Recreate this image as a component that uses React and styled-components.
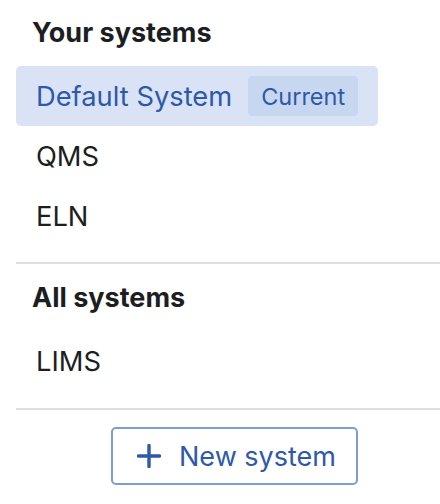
import React from "react";
import styled, { createGlobalStyle } from "styled-components";

const GlobalStyle = createGlobalStyle`
  html, body {
    margin: 0;
    padding: 0;
    background: #ffffff;
    overflow: hidden;
  }
  body {
    font-family: Inter, "Noto Sans", "Liberation Sans", sans-serif;
    color: #1c1e22;
  }
`;

const yourSystems = [
  { id: "default", name: "Default System", current: true },
  { id: "qms", name: "QMS" },
  { id: "eln", name: "ELN" }
];

const allSystems = [{ id: "lims", name: "LIMS" }];

export default function App() {
  return (
    <>
      <GlobalStyle />
      <Panel>
        <Section>
          <Heading>Your systems</Heading>
          {yourSystems.map(item => (
            <SystemRow key={item.id} $active={item.current}>
              {item.name}
              {item.current && <Badge>Current</Badge>}
            </SystemRow>
          ))}
        </Section>
        <Divider />
        <Section $spaced>
          <Heading>All systems</Heading>
          {allSystems.map(item => (
            <SystemRow key={item.id}>{item.name}</SystemRow>
          ))}
        </Section>
        <Divider />
        <Footer>
          <NewButton type="button">
            <PlusIcon />
            New system
          </NewButton>
        </Footer>
      </Panel>
    </>
  );
}

function PlusIcon() {
  return (
    <svg width="24" height="24" viewBox="0 0 24 24" fill="none">
      <path
        d="M12 1.5v21M1.5 12h21"
        stroke="currentColor"
        strokeWidth="3.4"
        strokeLinecap="round"
      />
    </svg>
  );
}

const Panel = styled.div`
  display: flex;
  flex-direction: column;
  padding-left: 16px;
`;

const Section = styled.div`
  display: flex;
  flex-direction: column;
  align-items: flex-start;
  padding: ${p => (p.$spaced ? "17px 0" : "16px 0")};
`;

const Heading = styled.div`
  font-size: 27px;
  font-weight: 700;
  line-height: 33px;
  padding-left: 16px;
  margin-bottom: 17px;
  color: #1c1e22;
`;

const SystemRow = styled.div`
  display: inline-flex;
  align-items: center;
  gap: 16px;
  height: 60px;
  box-sizing: border-box;
  padding: 0 20px;
  font-size: 27.3px;
  font-weight: 400;
  border-radius: 5px;
  color: ${p => (p.$active ? "#2e59a8" : "#1c1e22")};
  background: ${p => (p.$active ? "#dae3f5" : "transparent")};
`;

const Badge = styled.span`
  display: inline-flex;
  align-items: center;
  height: 40px;
  padding: 0 13px;
  border-radius: 4px;
  background: #c8d7f0;
  color: #2e59a8;
  font-size: 23.5px;
`;

const Divider = styled.div`
  height: 2px;
  background: #dedede;
`;

const Footer = styled.div`
  display: flex;
  justify-content: center;
  padding: 17px 0 0 13px;
`;

const NewButton = styled.button`
  display: inline-flex;
  align-items: center;
  gap: 18px;
  height: 58px;
  padding: 0 20px 0 24px;
  border: 2px solid #7f9dd3;
  border-radius: 5px;
  background: #ffffff;
  color: #2e59a8;
  font-family: inherit;
  font-size: 27px;
  cursor: pointer;
`;
